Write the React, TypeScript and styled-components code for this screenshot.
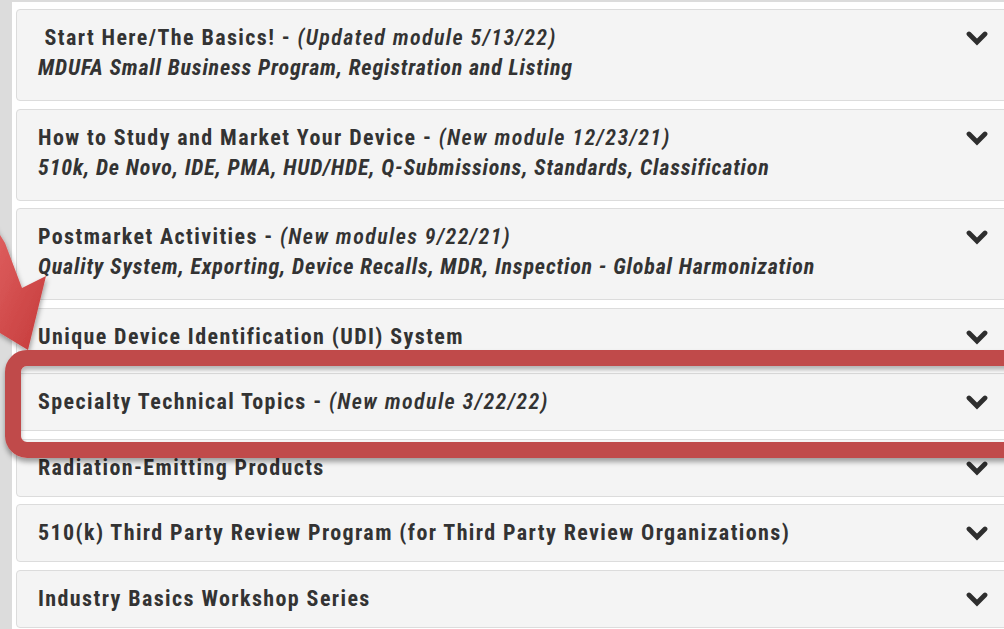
import React from 'react'
import styled, { createGlobalStyle } from 'styled-components'

const Global = createGlobalStyle`
  html, body {
    margin: 0;
    overflow: hidden;
    background: #dcdcdc;
  }
`

const Shell = styled.div`
  position: relative;
  height: 629px;
  overflow: hidden;
`

const Page = styled.div`
  margin: 2px 0 0 12px;
  height: 627px;
  background: #fff;
  overflow: hidden;
`

const List = styled.div`
  display: flex;
  flex-direction: column;
  gap: 7.5px;
  width: 994px;
  padding: 7px 0 0 4px;
`

const Panel = styled.div`
  display: flex;
  align-items: flex-start;
  justify-content: space-between;
  background: #f4f4f4;
  border: 1px solid #dcdcdc;
  border-radius: 4px;
  padding: 13px 21px;
  font-family: 'Roboto Condensed', 'Liberation Sans Narrow', sans-serif;
  font-size: 22px;
  line-height: 30px;
  letter-spacing: 1.4px;
  color: #333;
`

const Titles = styled.div`
  display: flex;
  flex-direction: column;
`

const Heading = styled.div`
  font-weight: 700;
  white-space: nowrap;
`

const Note = styled.em`
  font-weight: 600;
  font-style: italic;
`

const Sub = styled.div`
  font-weight: 700;
  font-style: italic;
  letter-spacing: 0.85px;
  white-space: nowrap;
  margin-bottom: 4px;
`

const Chevron = styled.svg`
  flex: none;
  width: 22px;
  height: 16px;
  margin-top: 7px;
`

const Highlight = styled.div`
  position: absolute;
  left: 5px;
  top: 350px;
  width: 1040px;
  height: 76px;
  border: 16px solid #c04a4a;
  border-radius: 22px;
  box-shadow: 0 4px 5px rgba(0, 0, 0, 0.35), inset 0 4px 5px rgba(0, 0, 0, 0.3);
  pointer-events: none;
`

const Arrow = styled.svg`
  position: absolute;
  left: 0;
  top: 200px;
  width: 60px;
  height: 170px;
  overflow: visible;
  pointer-events: none;
`

type Item = { title: string; note?: string; sub?: string; lead?: boolean }

const items: Item[] = [
  {
    title: 'Start Here/The Basics!',
    note: '(Updated module 5/13/22)',
    sub: 'MDUFA Small Business Program, Registration and Listing',
    lead: true,
  },
  {
    title: 'How to Study and Market Your Device',
    note: '(New module 12/23/21)',
    sub: '510k, De Novo, IDE, PMA, HUD/HDE, Q-Submissions, Standards, Classification',
  },
  {
    title: 'Postmarket Activities',
    note: '(New modules 9/22/21)',
    sub: 'Quality System, Exporting, Device Recalls, MDR, Inspection - Global Harmonization',
  },
  { title: 'Unique Device Identification (UDI) System' },
  { title: 'Specialty Technical Topics', note: '(New module 3/22/22)' },
  { title: 'Radiation-Emitting Products' },
  { title: '510(k) Third Party Review Program (for Third Party Review Organizations)' },
  { title: 'Industry Basics Workshop Series' },
]

const ChevronDown = () => (
  <Chevron viewBox="0 0 22 16">
    <path
      d="M3 4 L11 12 L19 4"
      fill="none"
      stroke="#2e2e2e"
      strokeWidth="4.8"
      strokeLinecap="round"
      strokeLinejoin="miter"
    />
  </Chevron>
)

const App: React.FC = () => (
  <Shell>
    <Global />
    <Page>
      <List>
        {items.map(item => (
          <Panel key={item.title}>
            <Titles>
              <Heading>
                {item.lead && '\u00a0'}
                {item.title}
                {item.note && (
                  <>
                    {' - '}
                    <Note>{item.note}</Note>
                  </>
                )}
              </Heading>
              {item.sub && <Sub>{item.sub}</Sub>}
            </Titles>
            <ChevronDown />
          </Panel>
        ))}
      </List>
    </Page>
    <Arrow viewBox="0 200 60 170">
      <defs>
        <linearGradient id="arrowFill" x1="0" y1="0" x2="1" y2="1">
          <stop offset="0" stopColor="#ee7676" />
          <stop offset="1" stopColor="#c53a3a" />
        </linearGradient>
        <filter id="arrowShadow" x="-50%" y="-50%" width="200%" height="200%">
          <feDropShadow dx="1" dy="3" stdDeviation="2.5" floodColor="#000" floodOpacity="0.35" />
        </filter>
      </defs>
      <polygon
        points="-40,170 5,243 22,288 46,276 28,350 0,333 -40,300"
        fill="url(#arrowFill)"
        filter="url(#arrowShadow)"
      />
    </Arrow>
    <Highlight />
  </Shell>
)

export default App
